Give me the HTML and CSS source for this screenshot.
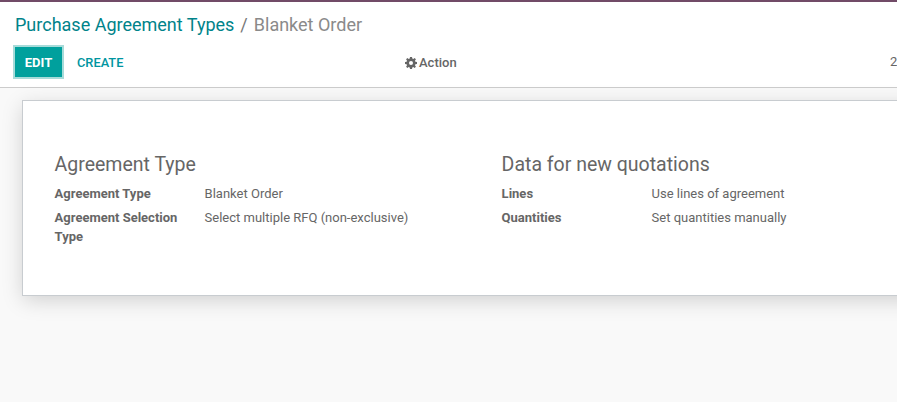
FILE: index.html
```html
<!DOCTYPE html>
<html lang="en">
<head>
<meta charset="utf-8">
<title>Blanket Order</title>
<link rel="stylesheet" href="styles.css">
</head>
<body>
<div class="navbar-line"></div>
<header class="control-panel">
  <nav class="breadcrumb"><a class="crumb-link">Purchase Agreement Types</a><span class="crumb-sep">/</span><span class="crumb-current">Blanket Order</span></nav>
  <div class="toolbar">
    <div class="buttons">
      <button class="btn btn-primary">EDIT</button>
      <button class="btn btn-link">CREATE</button>
    </div>
    <div class="action">
      <svg class="gear" viewBox="0 0 24 24" width="12" height="12"><path fill="#666" fill-rule="evenodd" d="M10 0h4l.6 3.2 2 .8L19.3 2.2l2.5 2.5L20 7.4l.8 2L24 10v4l-3.2.6-.8 2 1.8 2.7-2.5 2.5-2.7-1.8-2 .8L14 24h-4l-.6-3.2-2-.8-2.7 1.8-2.5-2.5L4 16.6l-.8-2L0 14v-4l3.2-.6.8-2-1.8-2.7 2.5-2.5L7.4 4l2-.8L10 0zm2 8a4 4 0 1 0 0 8 4 4 0 0 0 0-8z"/></svg>
      <span>Action</span>
    </div>
    <div class="pager">2</div>
  </div>
</header>
<main class="content">
  <section class="sheet">
    <div class="group">
      <h2 class="group-title">Agreement Type</h2>
      <div class="field"><div class="label">Agreement Type</div><div class="value">Blanket Order</div></div>
      <div class="field"><div class="label">Agreement Selection Type</div><div class="value">Select multiple RFQ (non-exclusive)</div></div>
    </div>
    <div class="group">
      <h2 class="group-title">Data for new quotations</h2>
      <div class="field"><div class="label">Lines</div><div class="value">Use lines of agreement</div></div>
      <div class="field"><div class="label">Quantities</div><div class="value">Set quantities manually</div></div>
    </div>
  </section>
</main>
</body>
</html>
```
FILE: styles.css
```css
* { box-sizing: border-box; }
html, body { margin: 0; height: 100%; overflow: hidden; }
body {
  width: 897px;
  height: 402px;
  background: #f9f9f9;
  font-family: Roboto, "Liberation Sans", sans-serif;
  font-size: 13px;
  line-height: 19.5px;
  color: #666;
}
.navbar-line { height: 2px; background: #714b67; }
.control-panel {
  height: 86px;
  background: #fff;
  border-bottom: 1px solid #ccc;
  padding: 11px 0 0 15px;
}
.breadcrumb { display: flex; align-items: baseline; font-size: 18px; line-height: 24px; height: 34px; }
.crumb-link { color: #00838a; }
.crumb-sep { margin: 0 6px; color: #777; }
.crumb-current { color: #8a8a8a; }
.toolbar { display: flex; height: 30px; align-items: center; position: relative; }
.buttons { display: flex; width: 390px; height: 30px; align-items: center; }
.btn {
  font-family: inherit;
  font-size: 13px;
  font-weight: 500;
  border: 0;
  background: none;
  padding: 0;
  cursor: pointer;
}
.btn-primary {
  width: 47px;
  height: 30px;
  background: #00a09d;
  color: #fff;
  box-shadow: 0 0 0 2px #a6dbd9;
  font-weight: 700;
}
.btn-link { color: #0095a0; margin-left: 15px; font-size: 12.8px; }
.action { display: flex; align-items: center; gap: 2px; font-weight: 500; font-size: 13px; color: #666; padding-top: 1px; }
.gear { display: block; }
.pager { position: absolute; left: 875px; top: 5px; font-size: 13px; }
.content { padding: 12px 0 0 22px; }
.sheet {
  width: 960px;
  height: 196px;
  background: #fff;
  border: 1px solid #c8ccd0;
  box-shadow: 0 5px 20px -1px rgba(0, 0, 0, .17);
  padding: 52px 32px 0 31.6px;
  display: flex;
}
.group { width: 447px; flex: none; }
.group-title { margin: 0 0 7px; font-size: 19.5px; font-weight: 400; line-height: 24px; color: #666; }
.field { display: flex; margin-bottom: 4px; }
.label { width: 150px; padding-right: 15px; font-weight: 700; color: #666; }
.value { flex: 1; }
```
